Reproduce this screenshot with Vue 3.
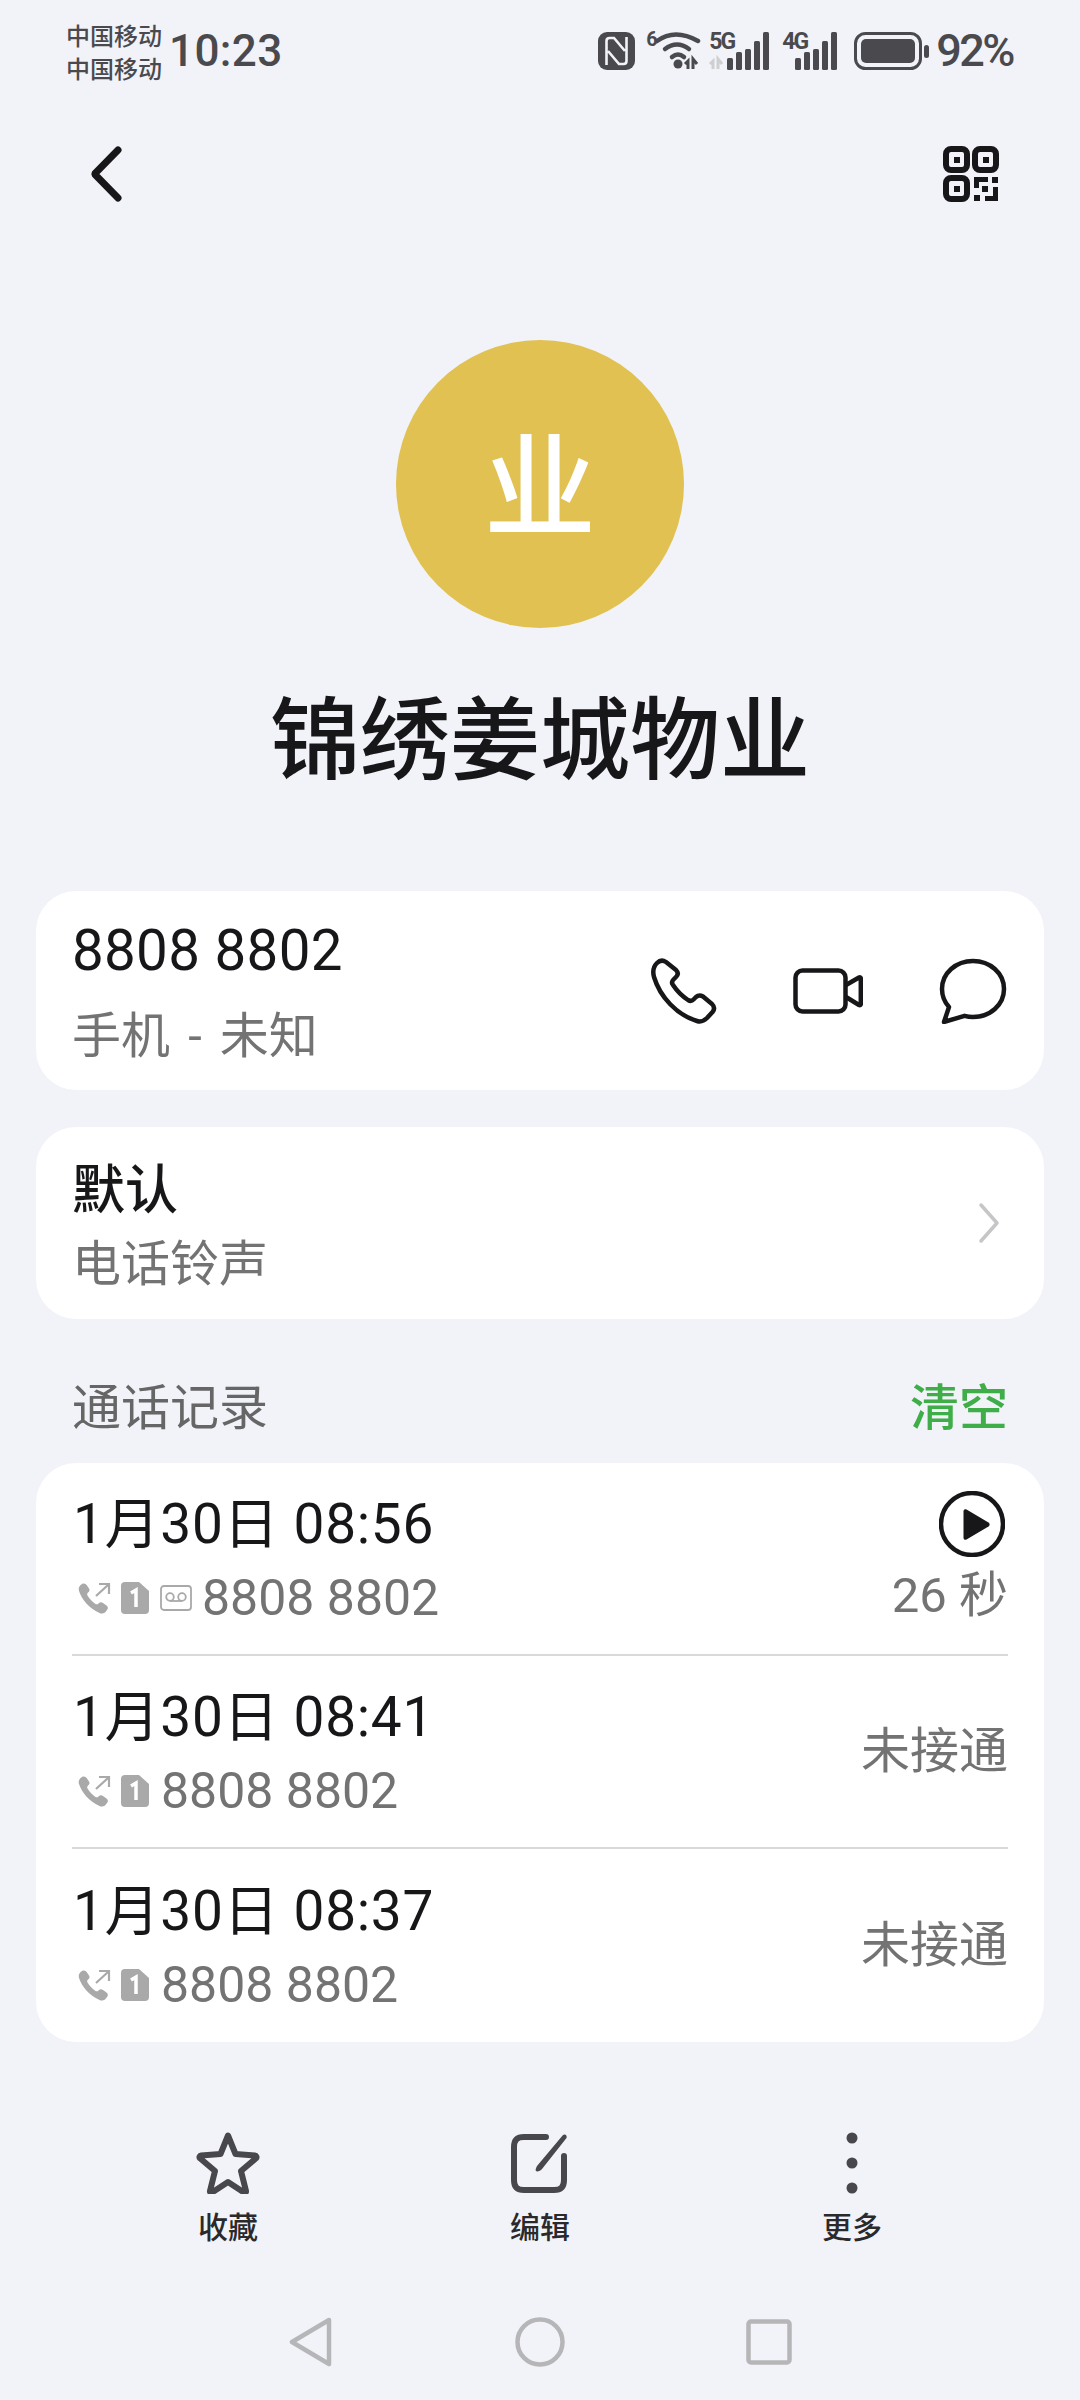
<script setup>
const rows = [
  { id: 1, date: '1月30日 08:56', voicemail: true, right: '26 秒', play: true },
  { id: 2, date: '1月30日 08:41', voicemail: false, right: '未接通', play: false },
  { id: 3, date: '1月30日 08:37', voicemail: false, right: '未接通', play: false },
]
</script>

<template>
  <div class="page">
    <div class="status">
      <div class="carrier"><span>中国移动</span><span>中国移动</span></div>
      <div class="time">10:23</div>
      <div class="status-right">
        <svg class="nfc" width="37" height="38" viewBox="0 0 37 38">
          <rect width="37" height="38" rx="9" fill="#4a4a4e"/>
          <path d="M8.500 33V9q0-3 3-3h4.500l11 13M28.500 5v24q0 3-3 3H21L10 19" fill="none" stroke="#f1f3f8" stroke-width="2.600"/>
        </svg>
        <div class="wifi">
          <span class="six">6</span>
          <svg width="52" height="38" viewBox="0 0 52 38">
            <path d="M4 9Q22-4 45 9" fill="none" stroke="#4a4a4e" stroke-width="4.500" stroke-linecap="round"/>
            <path d="M12 17Q24 8 36 17" fill="none" stroke="#4a4a4e" stroke-width="4.500" stroke-linecap="round"/>
            <path d="M19 25Q25 20 31 25" fill="none" stroke="#4a4a4e" stroke-width="4.500" stroke-linecap="round"/>
            <circle cx="25" cy="32" r="4.500" fill="#4a4a4e"/>
            <path d="M35 37V29l-3 3M40 37V27l4 5" fill="none" stroke="#4a4a4e" stroke-width="3"/>
          </svg>
        </div>
        <div class="signal s5">
          <span class="net">5G</span>
          <svg width="62" height="38" viewBox="0 0 62 38">
            <path d="M4 37V29l-3 3M9 37V27l4 5" fill="none" stroke="#cfcfd2" stroke-width="3"/>
            <rect x="18" y="26" width="6" height="12" rx="1.500" fill="#4a4a4e"/>
            <rect x="27" y="20" width="6" height="18" rx="1.500" fill="#4a4a4e"/>
            <rect x="36" y="17" width="6" height="21" rx="1.500" fill="#4a4a4e"/>
            <rect x="45" y="9" width="6" height="29" rx="1.500" fill="#4a4a4e"/>
            <rect x="54" y="0" width="6" height="38" rx="1.500" fill="#4a4a4e"/>
          </svg>
        </div>
        <div class="signal s4">
          <span class="net">4G</span>
          <svg width="44" height="38" viewBox="0 0 44 38">
            <rect x="0" y="26" width="6" height="12" rx="1.500" fill="#4a4a4e"/>
            <rect x="9" y="20" width="6" height="18" rx="1.500" fill="#4a4a4e"/>
            <rect x="18" y="17" width="6" height="21" rx="1.500" fill="#4a4a4e"/>
            <rect x="27" y="9" width="6" height="29" rx="1.500" fill="#4a4a4e"/>
            <rect x="36" y="0" width="6" height="38" rx="1.500" fill="#4a4a4e"/>
          </svg>
        </div>
        <svg class="battery" width="76" height="38" viewBox="0 0 76 38">
          <rect x="1.500" y="1.500" width="65" height="35" rx="10" fill="none" stroke="#4a4a4e" stroke-width="3"/>
          <rect x="7" y="7" width="54" height="24" rx="5" fill="#4a4a4e"/>
          <rect x="70" y="13" width="5" height="13" rx="2.500" fill="#4a4a4e"/>
        </svg>
        <div class="pct">92%</div>
      </div>
    </div>

    <div class="toolbar">
      <svg width="36" height="60" viewBox="0 0 36 60">
        <path d="M30 6 7 29.500a1 1 0 0 0 0 1L30 54" fill="none" stroke="#17171a" stroke-width="7" stroke-linecap="round" stroke-linejoin="round"/>
      </svg>
      <svg width="56" height="56" viewBox="0 0 56 56">
        <g fill="none" stroke="#17171a" stroke-width="6">
          <rect x="3" y="3" width="21" height="21" rx="5"/>
          <rect x="32" y="3" width="21" height="21" rx="5"/>
          <rect x="3" y="32" width="21" height="21" rx="5"/>
        </g>
        <g fill="#17171a">
          <rect x="11" y="11" width="6" height="6"/>
          <rect x="40" y="11" width="6" height="6"/>
          <rect x="11" y="40" width="6" height="6"/>
          <path d="M31 31h14v5H36v6h-5zM49 31h6v6h-6zM39 40h6v6h-6zM50 41h5v14H42v-5h8zM31 49h6v6h-6z"/>
        </g>
      </svg>
    </div>

    <div class="avatar">业</div>
    <div class="name">锦绣姜城物业</div>

    <div class="card phone-card">
      <div class="phone-text">
        <div class="number">8808 8802</div>
        <div class="sub phone-sub">手机 - 未知</div>
      </div>
      <div class="phone-actions">
        <svg width="66" height="66" viewBox="0 0 66 66">
          <path d="M6 5C9 2 12 2 15 4L25 12C27.500 14.500 27 17 25 19L22.500 21.500C21 23 20.500 25 22 27C26 33 31 38 37 42C39 43.200 41 43 42.500 41.500L45 39C47 37.200 49.500 37 52 38.500L61 46C63.500 48.500 63.500 51.500 61.500 54L56 60C53 63 49.500 64 46 63C26 57 9 39 3 19C1.500 13.500 2.500 8.500 6 5Z" fill="none" stroke="#17171a" stroke-width="4.500" stroke-linejoin="round"/>
        </svg>
        <svg width="70" height="46" viewBox="0 0 70 46">
          <rect x="2.500" y="2.500" width="50" height="41" rx="7" fill="none" stroke="#17171a" stroke-width="4.500"/>
          <path d="M53 17 66 9.500c1-.5 1.800 0 1.800 1V36c0 1-.8 1.500-1.800 1L53 29" fill="none" stroke="#17171a" stroke-width="4.500" stroke-linejoin="round"/>
        </svg>
        <svg width="68" height="66" viewBox="0 0 68 66">
          <path d="M34 3C51 3 65 15 65 31S51 59 34 59c-3 0-6-.5-8.500-1.200L5 64l5-15C5.500 44 3 38 3 31 3 15 17 3 34 3Z" fill="none" stroke="#17171a" stroke-width="4.500" stroke-linejoin="round"/>
        </svg>
      </div>
    </div>

    <div class="card ring-card">
      <div class="ring-text">
        <div class="ring-title">默认</div>
        <div class="sub ring-sub">电话铃声</div>
      </div>
      <svg width="22" height="42" viewBox="0 0 22 42">
        <path d="M3 3 19 21 3 39" fill="none" stroke="#c6c6c8" stroke-width="3.500" stroke-linecap="round" stroke-linejoin="round"/>
      </svg>
    </div>

    <div class="section-head">
      <span>通话记录</span>
      <span class="clear">清空</span>
    </div>

    <div class="card log-card">
      <div v-for="row in rows" :key="row.id" class="log-row">
        <div class="log-left">
          <div class="date">{{ row.date }}</div>
          <div class="log-sub">
            <svg class="call-ico" width="34" height="32" viewBox="0 0 34 32">
              <path d="M4 2c2-1 4 0 5 1.500l2 3c1 1.500 .5 3-1 4-1 1-1 2-.5 3 2 3.500 5 6.500 8 8.500 1 .5 2 .5 3-.5 1.500-1.500 3-1.500 4.500-.5l3.500 2.500c1.500 1.200 2 3 .5 4.500l-1.500 2c-1.500 1.500-4 2-6 1C11 26 4 18 1 9 0 6 1.500 3.500 4 2Z" fill="#a9a9a9"/>
              <path d="M18 14 30 3M21 2h10v10" fill="none" stroke="#a9a9a9" stroke-width="2.200"/>
            </svg>
            <svg class="sim-ico" width="28" height="32" viewBox="0 0 28 32">
              <path d="M4 0h14l10 9v19a4 4 0 0 1-4 4H4a4 4 0 0 1-4-4V4a4 4 0 0 1 4-4Z" fill="#a9a9a9"/>
              <path d="M10 11l5-3v17" fill="none" stroke="#fff" stroke-width="3.500"/>
            </svg>
            <svg v-if="row.voicemail" class="vm-ico" width="32" height="26" viewBox="0 0 32 26">
              <rect x="1" y="1" width="30" height="24" rx="3" fill="none" stroke="#a9a9a9" stroke-width="1.800"/>
              <circle cx="10" cy="12" r="3.800" fill="none" stroke="#a9a9a9" stroke-width="1.800"/>
              <circle cx="22" cy="12" r="3.800" fill="none" stroke="#a9a9a9" stroke-width="1.800"/>
              <path d="M10 16h12" stroke="#a9a9a9" stroke-width="1.800"/>
            </svg>
            <span class="log-num">8808 8802</span>
          </div>
        </div>
        <div class="log-right">
          <svg v-if="row.play" class="play" width="66" height="66" viewBox="0 0 66 66">
            <circle cx="33" cy="33" r="31" fill="none" stroke="#17171a" stroke-width="4.500"/>
            <path d="M24.500 20.500c0-2 1.500-2.800 3-2l22 13c1.500 1 1.500 3 0 4l-22 13c-1.500.8-3 0-3-2Z" fill="#17171a"/>
          </svg>
          <span class="log-status" :class="{ timed: row.play }">{{ row.right }}</span>
        </div>
      </div>
    </div>

    <div class="actions">
      <div class="action">
        <svg width="64" height="62" viewBox="0 0 64 62">
          <path d="M32 3.500 39.500 22l19.500 1.500c1.500.2 2 1.800 1 2.800L45 39l5 20c.3 1.300-1 2.200-2 1.500L32 50 16 60.500c-1 .7-2.300-.2-2-1.500l5-20L4 26.300c-1-1-.5-2.600 1-2.800L24.500 22Z" fill="none" stroke="#48484c" stroke-width="6" stroke-linejoin="round"/>
        </svg>
        <span>收藏</span>
      </div>
      <div class="action">
        <svg width="60" height="62" viewBox="0 0 60 62">
          <path d="M36 5H14C7 5 4 8 4 15v33c0 7 3 10 10 10h30c7 0 10-3 10-10V24" fill="none" stroke="#48484c" stroke-width="6" stroke-linecap="round"/>
          <path d="M53 3c2-1.500 4.500 .5 3.500 3L32 37c-1.500 2-5 3-6 2s0-3 1-5Z" fill="#48484c"/>
        </svg>
        <span>编辑</span>
      </div>
      <div class="action">
        <svg width="14" height="62" viewBox="0 0 14 62">
          <circle cx="7" cy="6" r="5.500" fill="#48484c"/>
          <circle cx="7" cy="31" r="5.500" fill="#48484c"/>
          <circle cx="7" cy="56" r="5.500" fill="#48484c"/>
        </svg>
        <span>更多</span>
      </div>
    </div>

    <div class="navbar">
      <svg width="44" height="50" viewBox="0 0 44 50">
        <path d="M40 3 3 25l37 22Z" fill="none" stroke="#b6b6b8" stroke-width="4.500" stroke-linejoin="round"/>
      </svg>
      <svg width="50" height="50" viewBox="0 0 50 50">
        <circle cx="25" cy="25" r="22.500" fill="none" stroke="#b6b6b8" stroke-width="4.500"/>
      </svg>
      <svg width="46" height="46" viewBox="0 0 46 46">
        <rect x="2.500" y="2.500" width="41" height="41" rx="2.500" fill="none" stroke="#b6b6b8" stroke-width="4.500"/>
      </svg>
    </div>
  </div>
</template>

<style scoped>
.page {
  width: 1080px;
  height: 2400px;
  overflow: hidden;
  background: #f1f3f8;
  font-family: Roboto, "Noto Sans CJK SC", sans-serif;
  color: #17171a;
}
.status {
  display: flex;
  align-items: center;
  height: 38px;
  padding: 32px 67px 0 66px;
  color: #4a4a4e;
}
.carrier {
  display: flex;
  flex-direction: column;
  padding-top: 5px;
  font-size: 24px;
  line-height: 33px;
  font-weight: 500;
  width: 103px;
  flex: none;
  white-space: nowrap;
}
.time {
  font-size: 44px;
  line-height: 38px;
  font-weight: 500;
  letter-spacing: .4px;
}
.status-right {
  margin-left: auto;
  display: flex;
  align-items: center;
}
.nfc { margin-right: 12px; }
.wifi {
  position: relative;
  width: 50px;
  height: 38px;
  margin-right: 12px;
  padding-left: 6px;
  box-sizing: border-box;
}
.six {
  position: absolute;
  left: -1px;
  top: -3px;
  font-size: 20px;
  line-height: 20px;
  font-weight: 700;
}
.signal {
  position: relative;
  height: 38px;
}
.s5 { width: 62px; margin-right: 11px; }
.s4 { width: 44px; margin-right: 15px; padding-left: 13px; }
.net {
  position: absolute;
  top: -1px;
  left: 0;
  font-size: 23px;
  line-height: 22px;
  font-weight: 700;
  letter-spacing: -2px;
}
.battery { margin-right: 6px; }
.pct {
  font-size: 45px;
  line-height: 38px;
  font-weight: 500;
  letter-spacing: -2.500px;
}
.toolbar {
  display: flex;
  justify-content: space-between;
  align-items: center;
  height: 60px;
  margin-top: 74px;
  padding: 0 81px 0 88px;
}
.avatar {
  width: 288px;
  height: 288px;
  margin: 136px auto 0;
  border-radius: 50%;
  background: #e0c152;
  color: #fff;
  font-size: 112px;
  font-weight: 500;
  line-height: 300px;
  text-align: center;
}
.name {
  margin-top: 64px;
  font-size: 90px;
  line-height: 100px;
  font-weight: 500;
  text-align: center;
}
.card {
  margin: 0 36px;
  background: #fff;
  border-radius: 40px;
}
.phone-card {
  margin-top: 99px;
  height: 199px;
  display: flex;
  align-items: center;
  justify-content: space-between;
  padding: 0 37px 0 36px;
}
.phone-text { padding-top: 3px; }
.number {
  font-size: 56.500px;
  line-height: 70px;
  letter-spacing: .3px;
}
.sub {
  font-size: 49px;
  line-height: 64px;
  color: #737373;
  margin-top: 19px;
}
.phone-sub { word-spacing: 6px; }
.phone-actions {
  display: flex;
  align-items: center;
  gap: 76px;
}
.ring-card {
  margin-top: 37px;
  height: 192px;
  display: flex;
  align-items: center;
  justify-content: space-between;
  padding: 0 44px 0 36px;
}
.ring-text { padding-top: 6px; }
.ring-title {
  font-size: 53px;
  line-height: 70px;
  font-weight: 500;
}
.ring-sub { margin-top: 7px; }
.section-head {
  display: flex;
  justify-content: space-between;
  padding: 0 72px;
  margin-top: 56px;
  height: 88px;
  font-size: 49px;
  line-height: 68px;
  color: #666;
}
.clear { color: #3fae49; font-weight: 500; }
.log-card { padding: 0 36px; height: 579px; }
.log-row {
  height: 193px;
  box-sizing: border-box;
  display: flex;
  justify-content: space-between;
  align-items: center;
  border-bottom: 2px solid #d9d9db;
}
.log-row:last-child { border-bottom: none; }
.log-left { padding-top: 3px; }
.date {
  font-size: 55px;
  line-height: 66px;
  margin-left: 1px;
  letter-spacing: .7px;
}
.log-sub {
  display: flex;
  align-items: center;
  margin-top: 10px;
  margin-left: 6px;
  height: 62px;
}
.call-ico { margin-right: 9px; }
.sim-ico { margin-right: 11px; }
.vm-ico { margin-right: 10px; }
.log-num {
  font-size: 50px;
  line-height: 62px;
  color: #737373;
  margin-left: 1px;
}
.vm-ico + .log-num { margin-left: 0; }
.log-right {
  display: flex;
  flex-direction: column;
  align-items: flex-end;
}
.play { margin-right: 3px; }
.log-status {
  font-size: 49px;
  line-height: 62px;
  color: #737373;
}
.timed { margin-top: 8px; }
.actions {
  display: grid;
  grid-template-columns: repeat(3, 312px);
  margin: 90px 72px 0;
}
.action {
  display: flex;
  flex-direction: column;
  align-items: center;
  font-size: 30px;
  line-height: 40px;
  font-weight: 500;
  gap: 14px;
  color: #2a2a2d;
}
.navbar {
  display: grid;
  grid-template-columns: repeat(3, 229px);
  justify-items: center;
  align-items: center;
  justify-content: center;
  margin-top: 69px;
}
</style>

<style>
html, body { margin: 0; padding: 0; }
</style>
